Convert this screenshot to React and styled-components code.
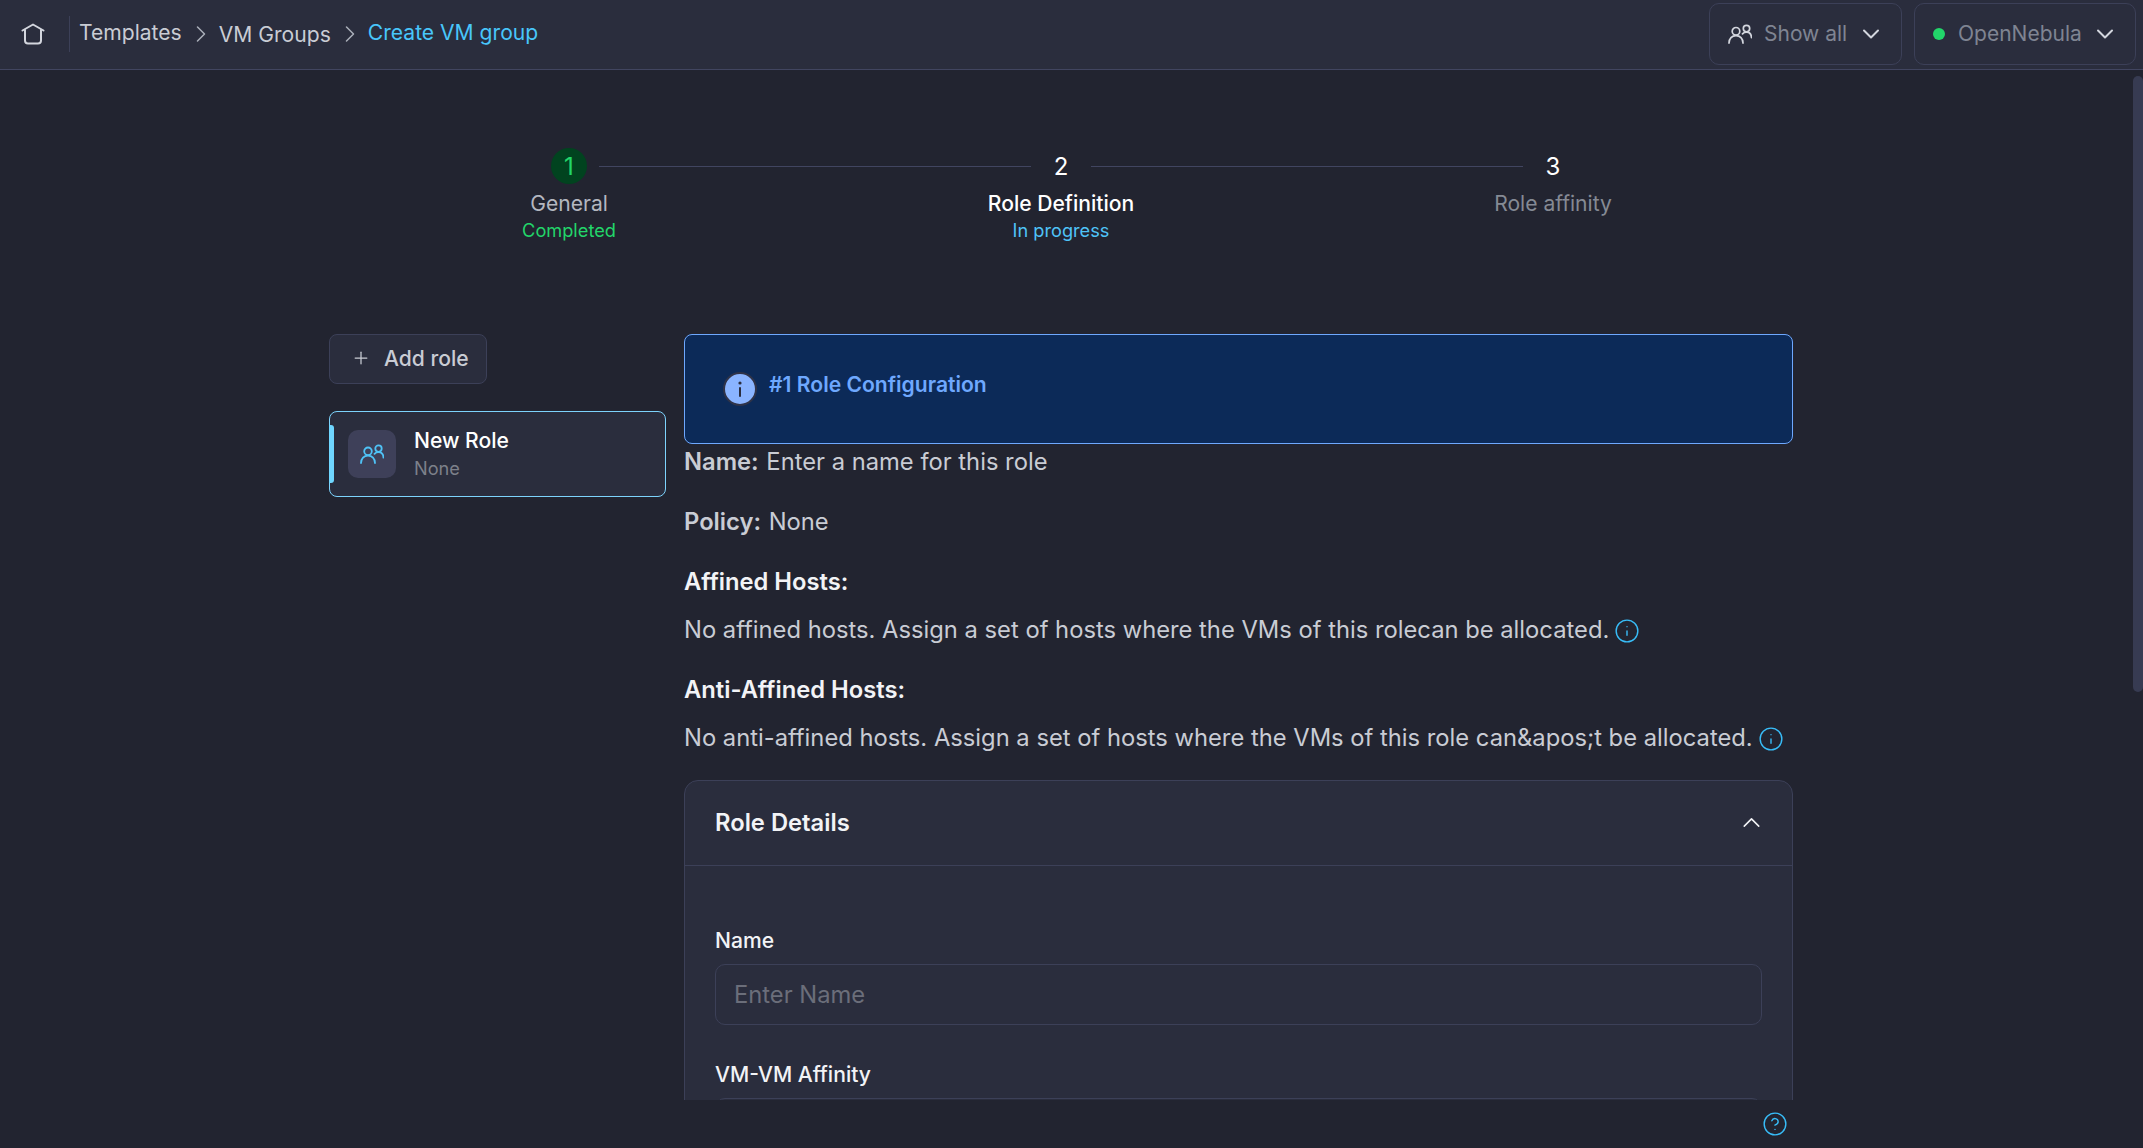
import React from 'react';
import styled, { createGlobalStyle } from 'styled-components';
import { ChevronDown, ChevronRight, ChevronUp, CircleHelp, Info, Plus } from 'lucide-react';

const GlobalStyle = createGlobalStyle`
  html, body, #root {
    margin: 0;
    height: 100%;
  }

  body {
    background: #222430;
    font-family: Inter, "Noto Sans", sans-serif;
    color: #c9ccd4;
    overflow: hidden;
  }
`;

const Page = styled.div`
  display: flex;
  flex-direction: column;
  height: 100vh;
`;

const TopBar = styled.header`
  flex: none;
  box-sizing: border-box;
  height: 70px;
  display: flex;
  align-items: center;
  padding: 0 7px 1px 21px;
  background: #2a2d3d;
  border-bottom: 1px solid #414560;
`;

const HomeButton = styled.div`
  display: flex;
  align-items: center;
  height: 36px;
  padding-right: 24px;
  border-right: 1px solid #3c4058;
  color: #d3d6de;
`;

const Crumbs = styled.nav`
  display: flex;
  align-items: center;
  margin-left: 9px;
  font-size: 21.1px;
  line-height: 30px;
`;

const Crumb = styled.span`
  color: ${({ $active }) => ($active ? '#48c6fb' : '#c9ccd4')};
  transform: translateY(${({ $low }) => ($low ? '1px' : '-1px')});
`;

const CrumbSep = styled.span`
  display: flex;
  margin: 0 4px 0 5px;
  color: #a9adb8;
`;

const BarActions = styled.div`
  margin-left: auto;
  display: flex;
  gap: 12px;
`;

const BarSelect = styled.div`
  box-sizing: border-box;
  height: 62px;
  width: ${({ $width }) => $width}px;
  display: flex;
  align-items: center;
  padding: 0 16px 0 18px;
  border: 1px solid #3c4058;
  border-radius: 10px;
  font-size: 21px;
  color: #7f8492;
`;

const BarIcon = styled.span`
  display: flex;
  color: #d3d6de;
`;

const BarLabel = styled.span`
  margin-left: ${({ $gap }) => $gap}px;
  margin-right: auto;
  padding-bottom: 2px;
`;

const BarChevron = styled(ChevronDown)`
  flex: none;
  color: #d3d6de;
`;

const Dot = styled.span`
  width: 12px;
  height: 12px;
  border-radius: 50%;
  background: #22d66a;
`;

const Scroller = styled.main`
  position: relative;
  flex: 1;
  min-height: 0;
  overflow: hidden;
`;

const ScrollThumb = styled.div`
  position: absolute;
  top: 6px;
  right: 0;
  width: 10px;
  height: 616px;
  background: #373b52;
  border-radius: 5px;
`;

const Content = styled.div`
  padding: 78px 350px 40px 329px;
`;

const Stepper = styled.ol`
  display: grid;
  grid-template-columns: 60px 432px 60px 432px 60px;
  row-gap: 7px;
  margin: 0 0 92px 210px;
  padding: 0;
  list-style: none;
`;

const StepHead = styled.li`
  height: 36px;
  display: flex;
  align-items: center;
  justify-content: center;
`;

const StepNumber = styled.span`
  width: 36px;
  height: 36px;
  display: flex;
  align-items: center;
  justify-content: center;
  border-radius: 50%;
  font-size: 24px;
  background: ${({ $done }) => ($done ? '#01431f' : 'transparent')};
  color: ${({ $done }) => ($done ? '#22d66a' : '#fff')};
`;

const Connector = styled.li`
  align-self: center;
  height: 1px;
  background: #414560;
`;

const StepText = styled.li`
  grid-column: ${({ $col }) => $col};
  justify-self: center;
  display: flex;
  flex-direction: column;
  align-items: center;
  white-space: nowrap;
`;

const StepTitle = styled.span`
  font-size: 21.1px;
  line-height: 26px;
  font-weight: ${({ $current }) => ($current ? 500 : 400)};
  color: ${({ $color }) => $color};
`;

const StepStatus = styled.span`
  margin-top: 1px;
  font-size: 18.2px;
  line-height: 24px;
  color: ${({ $color }) => $color};
`;

const Columns = styled.div`
  display: flex;
  align-items: flex-start;
  gap: 18px;
`;

const Sidebar = styled.aside`
  flex: none;
  width: 337px;
`;

const AddRole = styled.button`
  box-sizing: border-box;
  width: 158px;
  height: 50px;
  display: flex;
  align-items: center;
  gap: 13px;
  padding: 0 0 2px 21px;
  margin-bottom: 27px;
  background: #2a2d3d;
  border: 1px solid #3c4058;
  border-radius: 8px;
  font: 500 21.1px Inter, sans-serif;
  color: #c9ccd4;
`;

const RoleCard = styled.div`
  position: relative;
  box-sizing: border-box;
  height: 86px;
  display: flex;
  align-items: center;
  gap: 18px;
  padding-left: 18px;
  background: #2a2d3d;
  border: 1px solid #7dd3fc;
  border-radius: 8px;
`;

const RoleMarker = styled.span`
  position: absolute;
  left: -1px;
  top: 13px;
  width: 5px;
  height: 58px;
  background: #6fd6ff;
  border-radius: 0 3px 3px 0;
`;

const RoleTile = styled.span`
  width: 48px;
  height: 48px;
  display: flex;
  align-items: center;
  justify-content: center;
  background: #3e4059;
  border-radius: 10px;
  color: #4fc3f7;
`;

const RoleText = styled.div`
  display: flex;
  flex-direction: column;
  gap: 1px;
  padding-bottom: 2px;
`;

const RoleName = styled.span`
  font-size: 21.1px;
  line-height: 28px;
  font-weight: 500;
  color: #fff;
`;

const RoleSub = styled.span`
  font-size: 18.2px;
  line-height: 24px;
  color: #7d808a;
`;

const Details = styled.section`
  flex: 1;
  min-width: 0;
`;

const Banner = styled.div`
  box-sizing: border-box;
  height: 110px;
  display: flex;
  align-items: flex-start;
  gap: 12px;
  padding: 38px 0 0 38px;
  background: #0c2a58;
  border: 1px solid #6ea8fe;
  border-radius: 8px;
  font-size: 21.1px;
  line-height: 24px;
  font-weight: 600;
  color: #6ea8fe;
`;

const BannerIcon = styled.svg`
  flex: none;
  margin-top: -1px;
`;

const Line = styled.p`
  margin: 0 0 ${({ $gap }) => $gap ?? 24}px;
  font-size: 23.76px;
  line-height: 36px;
  color: #c9ccd4;

  strong {
    font-weight: 600;
    margin-right: 1px;
  }
`;

const Heading = styled.h4`
  margin: 0 0 12px;
  font-size: 23.76px;
  line-height: 36px;
  font-weight: 600;
  color: #f2f3f6;
`;

const HintIcon = styled(Info)`
  margin-left: 5px;
  vertical-align: -6px;
  color: #38bdf8;
`;

const Card = styled.div`
  margin-top: 24px;
  background: #2a2d3d;
  border: 1px solid #3c4058;
  border-radius: 14px;
`;

const CardHeader = styled.div`
  box-sizing: border-box;
  height: 85px;
  display: flex;
  align-items: center;
  justify-content: space-between;
  padding: 0 26px 2px 30px;
  border-bottom: 1px solid #3c4058;
  font-size: 23.76px;
  font-weight: 600;
  color: #f2f3f6;
`;

const CardBody = styled.div`
  display: flex;
  flex-direction: column;
  gap: 37px;
  padding: 62px 30px 40px;
`;

const Field = styled.label`
  display: flex;
  flex-direction: column;
  gap: 10px;
`;

const FieldLabel = styled.span`
  font-size: 21.1px;
  line-height: 26px;
  font-weight: 500;
  color: #f2f3f6;
`;

const FieldInput = styled.input`
  box-sizing: border-box;
  height: 61px;
  padding: 0 18px;
  background: transparent;
  border: 1px solid #3c4058;
  border-radius: 10px;
  font: 400 23.76px Inter, sans-serif;
  color: #fff;

  &::placeholder {
    color: #6b6e7a;
  }
`;

const BottomBar = styled.footer`
  flex: none;
  height: 48px;
  display: flex;
  align-items: center;
  justify-content: flex-end;
  padding-right: 355px;
  color: #38bdf8;
`;

const HomeIcon = () => (
  <svg width="24" height="22" viewBox="0 0 24 22" fill="none" stroke="currentColor" strokeWidth="2" strokeLinecap="round" strokeLinejoin="round">
    <path d="M1.5 7.5 12 1.5l10.5 6" />
    <path d="M4 7v10.500a3 3 0 0 0 3 3h10a3 3 0 0 0 3-3V7" />
  </svg>
);

const UsersIcon = ({ size = 24, width = 1.7 }) => (
  <svg width={size} height={size * 0.84} viewBox="0 0 24 20" fill="none" stroke="currentColor" strokeWidth={width} strokeLinecap="round">
    <circle cx="8" cy="7.200" r="3.800" />
    <circle cx="18.500" cy="4.500" r="3.200" />
    <path d="M1 19c0-4.500 3-7.500 7-7.500s7 3 7 7.500" />
    <path d="M14.500 9.800c1-1.200 2.400-1.800 4-1.800 3 0 4.800 2.300 5 5.500" />
  </svg>
);

const InfoBadge = () => (
  <BannerIcon width="34" height="34" viewBox="0 0 34 34">
    <circle cx="17" cy="17" r="16" fill="#8ab4ff" stroke="#2f3348" strokeWidth="2" />
    <circle cx="17" cy="11" r="1.600" fill="#2a2d3d" />
    <rect x="16" y="15" width="2" height="10" rx="1" fill="#2a2d3d" />
  </BannerIcon>
);

const App = () => (
  <Page>
    <GlobalStyle />
    <TopBar>
      <HomeButton>
        <HomeIcon />
      </HomeButton>
      <Crumbs>
        <Crumb>Templates</Crumb>
        <CrumbSep><ChevronRight size={28} strokeWidth={1.3} /></CrumbSep>
        <Crumb $low>VM Groups</Crumb>
        <CrumbSep><ChevronRight size={28} strokeWidth={1.3} /></CrumbSep>
        <Crumb $active>Create VM group</Crumb>
      </Crumbs>
      <BarActions>
        <BarSelect $width={193}>
          <BarIcon><UsersIcon /></BarIcon>
          <BarLabel $gap={12}>Show all</BarLabel>
          <BarChevron size={28} strokeWidth={1.7} />
        </BarSelect>
        <BarSelect $width={222}>
          <Dot />
          <BarLabel $gap={13}>OpenNebula</BarLabel>
          <BarChevron size={28} strokeWidth={1.7} />
        </BarSelect>
      </BarActions>
    </TopBar>
    <Scroller>
      <Content>
        <Stepper>
          <StepHead><StepNumber $done>1</StepNumber></StepHead>
          <Connector />
          <StepHead><StepNumber>2</StepNumber></StepHead>
          <Connector />
          <StepHead><StepNumber>3</StepNumber></StepHead>
          <StepText $col={1}>
            <StepTitle $color="#b4b7c0">General</StepTitle>
            <StepStatus $color="#22d66a">Completed</StepStatus>
          </StepText>
          <StepText $col={3}>
            <StepTitle $current $color="#fff">Role Definition</StepTitle>
            <StepStatus $color="#4fc3f7">In progress</StepStatus>
          </StepText>
          <StepText $col={5}>
            <StepTitle $color="#858a94">Role affinity</StepTitle>
          </StepText>
        </Stepper>
        <Columns>
          <Sidebar>
            <AddRole>
              <Plus size={20} strokeWidth={1.5} />
              Add role
            </AddRole>
            <RoleCard>
              <RoleMarker />
              <RoleTile><UsersIcon size={24} width={1.8} /></RoleTile>
              <RoleText>
                <RoleName>New Role</RoleName>
                <RoleSub>None</RoleSub>
              </RoleText>
            </RoleCard>
          </Sidebar>
          <Details>
            <Banner>
              <InfoBadge />
              #1 Role Configuration
            </Banner>
            <Line><strong>Name:</strong> Enter a name for this role</Line>
            <Line><strong>Policy:</strong> None</Line>
            <Heading>Affined Hosts:</Heading>
            <Line>
              No affined hosts. Assign a set of hosts where the VMs of this rolecan be allocated.
              <HintIcon size={26} strokeWidth={1.3} />
            </Line>
            <Heading>Anti-Affined Hosts:</Heading>
            <Line $gap={0}>
              No anti-affined hosts. Assign a set of hosts where the VMs of this role can&amp;apos;t be allocated.
              <HintIcon size={26} strokeWidth={1.3} />
            </Line>
            <Card>
              <CardHeader>
                Role Details
                <ChevronUp size={29} strokeWidth={1.3} />
              </CardHeader>
              <CardBody>
                <Field>
                  <FieldLabel>Name</FieldLabel>
                  <FieldInput placeholder="Enter Name" />
                </Field>
                <Field>
                  <FieldLabel>VM-VM Affinity</FieldLabel>
                  <FieldInput />
                </Field>
              </CardBody>
            </Card>
          </Details>
        </Columns>
      </Content>
      <ScrollThumb />
    </Scroller>
    <BottomBar>
      <CircleHelp size={26} strokeWidth={1.3} />
    </BottomBar>
  </Page>
);

export default App;
